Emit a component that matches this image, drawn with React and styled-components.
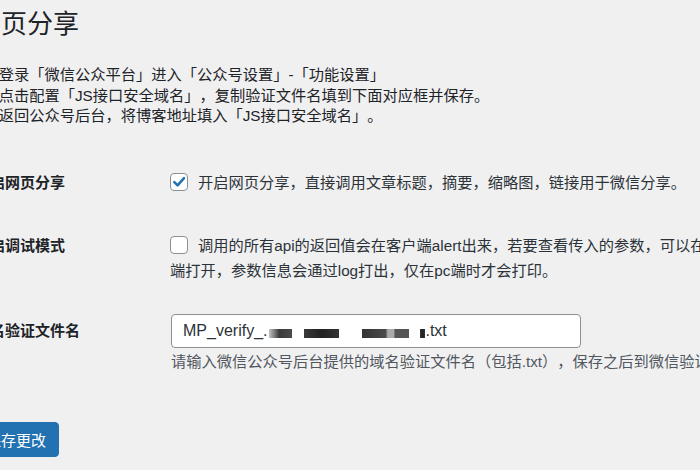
import React from "react";
import styled, { createGlobalStyle } from "styled-components";

const GlobalStyle = createGlobalStyle`
    html, body {
        margin: 0;
        padding: 0;
        background: #f0f0f1;
        overflow: hidden;
    }
    body {
        font-family: "Liberation Sans", "Noto Sans CJK SC", sans-serif;
        color: #1d2327;
        text-spacing-trim: space-all;
    }
`;

function App() {
    return (
        <>
            <GlobalStyle />
            <Wrap>
                <Title>网页分享</Title>
                <Notes>
                    <p>1、登录「微信公众平台」进入「公众号设置」-「功能设置」</p>
                    <p>2、点击配置「JS接口安全域名」，复制验证文件名填到下面对应框并保存。</p>
                    <p>3、返回公众号后台，将博客地址填入「JS接口安全域名」。</p>
                </Notes>

                <Row $top={43}>
                    <Label>开启网页分享</Label>
                    <Field>
                        <CheckLine>
                            <Checkbox>
                                <svg width="14" height="14" viewBox="0 0 14 14">
                                    <path
                                        d="M2.3 7.2 L5.6 10.4 L12 3.2"
                                        fill="none"
                                        stroke="#2271b1"
                                        strokeWidth="2.5"
                                        strokeLinecap="round"
                                        strokeLinejoin="round"
                                    />
                                </svg>
                            </Checkbox>
                            开启网页分享，直接调用文章标题，摘要，缩略图，链接用于微信分享。
                        </CheckLine>
                    </Field>
                </Row>

                <Row $top={38}>
                    <Label>开启调试模式</Label>
                    <Field>
                        <CheckLine>
                            <Checkbox />
                            调用的所有api的返回值会在客户端alert出来，若要查看传入的参数，可以在pc
                        </CheckLine>
                        <Wrapped>端打开，参数信息会通过log打出，仅在pc端时才会打印。</Wrapped>
                    </Field>
                </Row>

                <Row $top={31}>
                    <Label $tall>域名验证文件名</Label>
                    <Field>
                        <TextBox>
                            MP_verify_.
                            <Redact $w={23} $tone="fade" />
                            <Redact $w={35} $gap={12} />
                            <Redact $w={47} $gap={23} $tone="split" />
                            <Redact $w={5} $gap={11} />
                            .txt
                        </TextBox>
                        <Description>
                            请输入微信公众号后台提供的域名验证文件名（包括.txt），保存之后到微信验证
                        </Description>
                    </Field>
                </Row>

                <SaveButton>保存更改</SaveButton>
            </Wrap>
        </>
    );
}

export default App;

const tones = {
    fade: "linear-gradient(90deg, #c4c4c4, #3a3a3a 45%, #4a4a4a 100%)",
    split: "linear-gradient(90deg, #333 0, #4a4a4a 50%, #aaa 55%, #aaa 68%, #555 70%, #555 100%)",
    solid: "linear-gradient(90deg, #3a3a3a, #222 50%, #333)",
};

const Wrap = styled.div`
    margin-left: -25px;
    padding-top: 7px;
    width: 900px;
`;

const Title = styled.h1`
    margin: 0;
    font-size: 26px;
    font-weight: 400;
    line-height: 34px;
`;

const Notes = styled.div`
    margin-top: 24px;

    p {
        margin: 0;
        font-size: 15.25px;
        line-height: 20.5px;
        white-space: nowrap;
    }
`;

const Row = styled.div`
    display: grid;
    grid-template-columns: 195px 1fr;
    align-items: start;
    margin-top: ${(p) => p.$top}px;
`;

const Label = styled.div`
    font-size: 15px;
    font-weight: 700;
    line-height: ${(p) => (p.$tall ? "34px" : "25px")};
    white-space: nowrap;
`;

const Field = styled.div`
    font-size: 15.25px;
    line-height: 25px;
    color: #2c3338;
`;

const CheckLine = styled.div`
    display: flex;
    align-items: center;
    gap: 10px;
    white-space: nowrap;
`;

const Checkbox = styled.span`
    flex: none;
    width: 18px;
    height: 18px;
    box-sizing: border-box;
    border: 1px solid #8c8f94;
    border-radius: 4px;
    background: #fff;
    display: inline-flex;
    align-items: center;
    justify-content: center;
`;

const Wrapped = styled.div`
    white-space: nowrap;
`;

const TextBox = styled.div`
    width: 410px;
    height: 34px;
    box-sizing: border-box;
    margin-left: 1px;
    padding: 0 11px;
    border: 1px solid #8c8f94;
    border-radius: 4px;
    background: #fff;
    display: flex;
    align-items: center;
    font-size: 16px;
    color: #2c3338;
    white-space: nowrap;
`;

const Redact = styled.span`
    display: inline-block;
    width: ${(p) => p.$w}px;
    height: 9px;
    margin-left: ${(p) => p.$gap || 2}px;
    margin-top: 5px;
    background: ${(p) => tones[p.$tone || "solid"]};
    filter: blur(0.6px);
`;

const Description = styled.div`
    margin-top: 4px;
    margin-left: 1px;
    font-size: 15.25px;
    line-height: 20px;
    color: #50575e;
    white-space: nowrap;
`;

const SaveButton = styled.button`
    margin-top: 50px;
    margin-left: -2px;
    height: 35px;
    padding: 0 12px;
    border: 1px solid #2271b1;
    border-radius: 4px;
    background: #2271b1;
    color: #fff;
    font-family: "Liberation Sans", "Noto Sans CJK SC", sans-serif;
    font-size: 15px;
    cursor: pointer;
`;
